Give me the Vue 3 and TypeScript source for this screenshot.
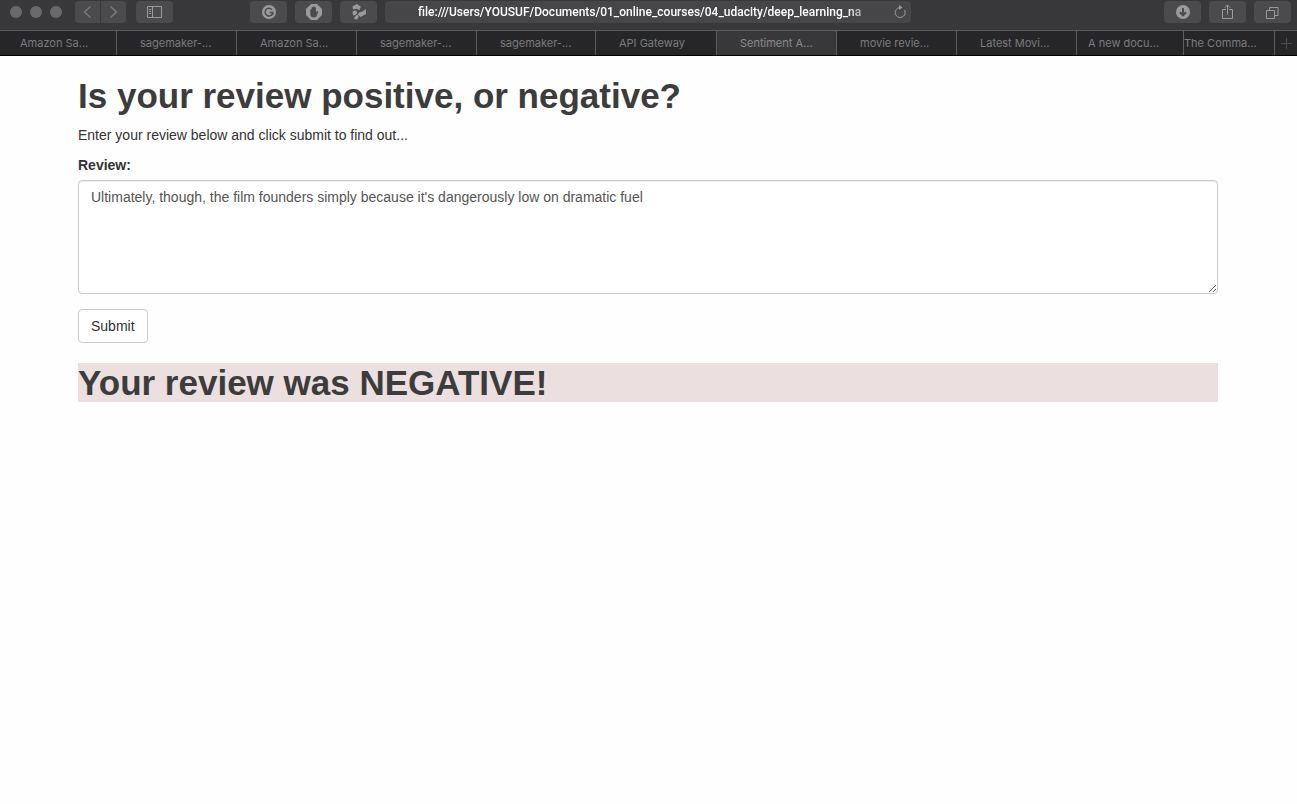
<script setup lang="ts">
import { ref } from 'vue'

interface Tab {
  title: string
  kind?: 'active' | 'first' | 'narrow' | 'clipped'
}

const tabs: Tab[] = [
  { title: 'Amazon Sa...', kind: 'first' },
  { title: 'sagemaker-...' },
  { title: 'Amazon Sa...' },
  { title: 'sagemaker-...' },
  { title: 'sagemaker-...' },
  { title: 'API Gateway' },
  { title: 'Sentiment A...', kind: 'active' },
  { title: 'movie revie...' },
  { title: 'Latest Movi...' },
  { title: 'A new docu...', kind: 'narrow' },
  { title: 'The Comma...', kind: 'clipped' },
]

const address = ref('file:///Users/YOUSUF/Documents/01_online_courses/04_udacity/deep_learning_na')
const review = ref("Ultimately, though, the film founders simply because it's dangerously low on dramatic fuel")
const result = ref('Your review was NEGATIVE!')
</script>

<template>
  <div class="window">
    <header class="chrome">
      <div class="toolbar">
        <div class="lights"><i></i><i></i><i></i></div>
        <div class="history">
          <button type="button" class="tool half back" aria-label="Back">
            <svg width="26" height="22" viewBox="0 0 26 22"><path d="M15.5 5.5 9.5 11l6 5.5" /></svg>
          </button>
          <button type="button" class="tool half forward" aria-label="Forward">
            <svg width="26" height="22" viewBox="0 0 26 22"><path d="m9.5 5.5 6 5.5-6 5.5" /></svg>
          </button>
        </div>
        <button type="button" class="tool" aria-label="Sidebar">
          <svg width="15" height="12" viewBox="0 0 15 12">
            <path d="M.5.5h14v11H.5zM5.5.5v11M2 3.5h2M2 5.5h2M2 7.5h2" />
          </svg>
        </button>
        <div class="middle">
          <button type="button" class="tool" aria-label="Grammar checker">
            <svg width="14" height="14" viewBox="0 0 14 14">
              <circle class="solid" cx="7" cy="7" r="7" />
              <path class="cut" d="M10 4.6A3.9 3.9 0 1 0 10.9 7.4H7.6M10.9 7.4V9.5" />
            </svg>
          </button>
          <button type="button" class="tool" aria-label="Ad blocker">
            <svg width="16" height="16" viewBox="0 0 16 16">
              <path class="solid" d="M5 0h6l5 5v6l-5 5H5l-5-5V5z" />
              <path class="hole" d="M4.3 5.5q.7-1 1.3 0V3.5q.7-1 1.4 0v-.8q.8-1 1.5 0v.8q.8-.9 1.4 0V8.5l1.3-1.4q1.2-.5.9.6L10.7 11.9Q9.9 13.6 8 13.6 4.3 13.6 4.3 10z" />
            </svg>
          </button>
          <button type="button" class="tool" aria-label="Pinwheel extension">
            <svg width="16" height="16" viewBox="0 0 16 16">
              <path class="solid" d="M1.500 2.200 6 0 9.800 2.800 8.500 6 5.500 4.800 2 5.500zM8.500 8.200 11 7.800 15 5v5L9.500 13 6.800 10.500zM1.500 7.500 5 6.200 6.300 9 4.500 11 2 11.500zM4.500 12 6.500 10.500 7.800 12.800 6 15.800 2.800 14.500z" />
            </svg>
          </button>
          <div class="address">
            <input v-model="address" type="text" aria-label="Address" spellcheck="false" />
            <button type="button" class="reload" aria-label="Reload">
              <svg width="14" height="14" viewBox="0 0 14 14">
                <path d="M7 2.5A5 5 0 1 0 11.5 5" />
                <path class="solid" d="M6 0 9.5 2.5 6 5z" />
              </svg>
            </button>
          </div>
        </div>
        <div class="actions">
          <button type="button" class="tool" aria-label="Downloads">
            <svg width="14" height="14" viewBox="0 0 14 14">
              <circle class="solid" cx="7" cy="7" r="7" />
              <path class="cut arrow" d="M7 3v7M3.9 7.2 7 10.3l3.1-3.1" />
            </svg>
          </button>
          <button type="button" class="tool" aria-label="Share">
            <svg width="11" height="16" viewBox="0 0 11 16">
              <path d="M4 5.5H.5v9h10v-9H7M5.5 10.5V1M2.8 3.6 5.5.9l2.7 2.7" />
            </svg>
          </button>
          <button type="button" class="tool" aria-label="Show all tabs">
            <svg width="13" height="13" viewBox="0 0 13 13">
              <path d="M.5 4.5h8v8h-8zM3.5 4.5v-3h8.5v8H8.5" />
            </svg>
          </button>
        </div>
      </div>
      <nav class="tabs" aria-label="Tabs">
        <button v-for="(tab, i) in tabs" :key="i" type="button" class="tab" :class="tab.kind">{{ tab.title }}</button>
        <button type="button" class="add" aria-label="New tab">
          <svg width="11" height="11" viewBox="0 0 11 11"><path d="M5.5 0v11M0 5.5h11" /></svg>
        </button>
      </nav>
    </header>

    <main class="page">
      <h1>Is your review positive, or negative?</h1>
      <p>Enter your review below and click submit to find out...</p>
      <form @submit.prevent>
        <label for="review">Review:</label>
        <textarea id="review" v-model="review" rows="5" spellcheck="false"></textarea>
        <button type="submit" class="submit">Submit</button>
      </form>
      <h1 class="result">{{ result }}</h1>
    </main>
  </div>
</template>

<style>
body {
  margin: 0;
  background: #fefefe;
}
</style>

<style scoped>
.window,
.window * {
  box-sizing: border-box;
}
.window {
  font-family: "Liberation Sans", Arial, sans-serif;
  font-size: 14px;
  line-height: 20px;
  color: #333;
}
button,
input {
  font: inherit;
  color: inherit;
  margin: 0;
  padding: 0;
  border: 0;
  background: none;
}
.chrome {
  font-family: Inter, sans-serif;
  border-bottom: 1px solid #000;
}
.chrome svg {
  display: block;
  fill: none;
  stroke: #9a9a9b;
  stroke-width: 1;
}
.chrome .solid {
  fill: #9a9a9b;
  stroke: none;
}
.chrome .hole {
  fill: #4b4b4d;
  stroke: none;
}
.chrome .cut {
  stroke: #4b4b4d;
  stroke-width: 1.5;
}
.chrome .arrow {
  stroke-width: 2;
}
.toolbar {
  display: flex;
  align-items: flex-start;
  height: 31px;
  padding: 1px 6px 0 10px;
  background: #38383a;
  border-bottom: 1px solid #5c5c5e;
}
.lights {
  display: flex;
  gap: 8px;
  padding-top: 5px;
}
.lights i {
  width: 12px;
  height: 12px;
  border-radius: 50%;
  background: #69696a;
}
.history {
  display: flex;
  gap: 1px;
  margin: 0 10px 0 13px;
}
.tool {
  display: flex;
  align-items: center;
  justify-content: center;
  flex: none;
  width: 37px;
  height: 22px;
  border-radius: 4px;
  background: #4b4b4d;
}
.half {
  width: 25px;
}
.chrome .half svg {
  flex: none;
  stroke: #7a7a7b;
  stroke-width: 1.5;
}
.back {
  border-radius: 4px 0 0 4px;
}
.forward {
  border-radius: 0 4px 4px 0;
}
.middle {
  display: flex;
  flex: 1;
  gap: 8px;
  min-width: 0;
  margin: 0 253px 0 77px;
}
.actions {
  display: flex;
  flex: none;
  gap: 8px;
}
.address {
  display: flex;
  align-items: center;
  flex: 1;
  min-width: 0;
  height: 22px;
  padding: 0 4px 0 33px;
  border-radius: 4px;
  background: #464648;
}
.address input {
  flex: 1;
  min-width: 0;
  height: 22px;
  margin-right: 14px;
  font-family: Roboto, sans-serif;
  font-size: 12px;
  font-weight: 500;
  color: #fff;
  outline: 0;
  mask-image: linear-gradient(to left, transparent, #000 32px);
}
.tabs {
  display: grid;
  grid-template-columns: 117fr 120fr 120fr 120fr 119fr 121fr 120fr 120fr 120fr 107fr 91fr 22fr;
  height: 24px;
  background: #262628;
}
.tab {
  min-width: 0;
  padding-left: 23px;
  overflow: hidden;
  border-right: 1px solid #5c5c5e;
  font-size: 11px;
  text-align: left;
  white-space: nowrap;
  color: #7c7c7d;
}
.first {
  padding-left: 20px;
}
.active {
  background: #38383a;
  color: #8c8c8d;
}
.narrow {
  padding-left: 11px;
}
.clipped {
  padding-left: 0;
}
.add {
  display: flex;
  align-items: center;
  justify-content: center;
}
.chrome .add svg {
  stroke: #4c4c4e;
}
.page {
  padding: 20px 79px 0 78px;
}
h1 {
  margin: 0 0 10px;
  font-size: 35px;
  font-weight: 700;
  line-height: 39px;
  color: #3c3c3c;
}
p {
  margin: 0 0 10px;
}
label {
  display: block;
  margin-bottom: 5px;
  font-weight: 700;
}
textarea {
  display: block;
  width: 100%;
  height: 114px;
  margin: 0 0 15px;
  padding: 6px 12px;
  border: 1px solid #ccc;
  border-radius: 4px;
  background: #fff;
  box-shadow: inset 0 1px 1px rgba(0, 0, 0, 0.075);
  font: inherit;
  color: #555;
  outline: 0;
  resize: vertical;
}
.submit {
  display: block;
  height: 34px;
  padding: 0 12px;
  border: 1px solid #ccc;
  border-radius: 4px;
  background: #fff;
}
.result {
  margin-top: 20px;
  background: #ebdfdf;
}
</style>
